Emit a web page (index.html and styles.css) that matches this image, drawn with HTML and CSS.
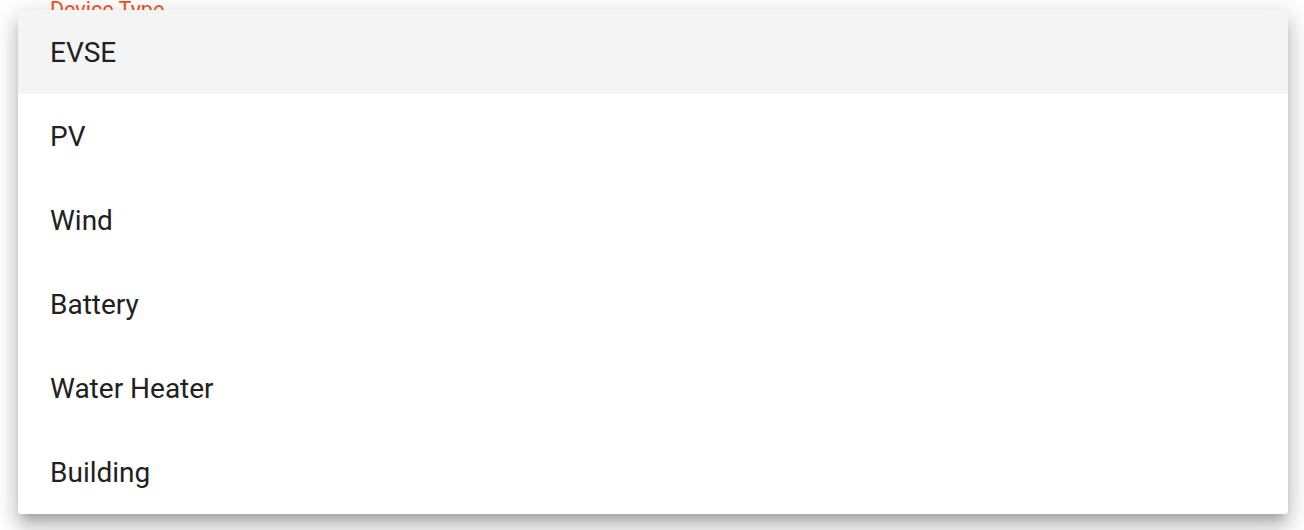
FILE: index.html
```html
<!DOCTYPE html>
<html lang="en">
<head>
  <meta charset="UTF-8">
  <title>Device Type</title>
  <link rel="stylesheet" href="styles.css">
</head>
<body>
  <!-- Campo por trás do menu -->
  <div class="field">
    <label class="field-label">Device Type</label>
  </div>

  <!-- Menu aberto -->
  <ul class="select-menu" role="listbox">
    <li class="option active" role="option">EVSE</li>
    <li class="option" role="option">PV</li>
    <li class="option" role="option">Wind</li>
    <li class="option" role="option">Battery</li>
    <li class="option" role="option">Water Heater</li>
    <li class="option" role="option">Building</li>
  </ul>
</body>
</html>
```

FILE: styles.css
```css
:root {
  --accent: #f4511e;
  --text: #212121;
  --active-bg: #f4f4f4;
}

* {
  margin: 0;
  padding: 0;
  box-sizing: border-box;
}

body {
  font-family: Roboto, "Liberation Sans", sans-serif;
  background: #fff;
  width: 1304px;
  height: 530px;
  overflow: hidden;
  position: relative;
}

.field {
  padding: 0 50px;
}

.field-label {
  display: block;
  color: var(--accent);
  font-size: 21.5px;
  line-height: 24px;
  margin-top: -2px;
}

.select-menu {
  position: absolute;
  top: 10px;
  left: 18px;
  width: 1270px;
  list-style: none;
  background: #fff;
  border-radius: 3px;
  box-shadow: 0 9px 9px -5px rgba(0, 0, 0, 0.2),
              0 14px 18px 2px rgba(0, 0, 0, 0.14),
              0 5px 24px 4px rgba(0, 0, 0, 0.12);
}

.option {
  height: 84px;
  display: flex;
  align-items: center;
  padding: 0 32px;
  font-size: 28px;
  color: var(--text);
  cursor: pointer;
}

.option.active {
  background: var(--active-bg);
}

.option:hover {
  background: var(--active-bg);
}
```
